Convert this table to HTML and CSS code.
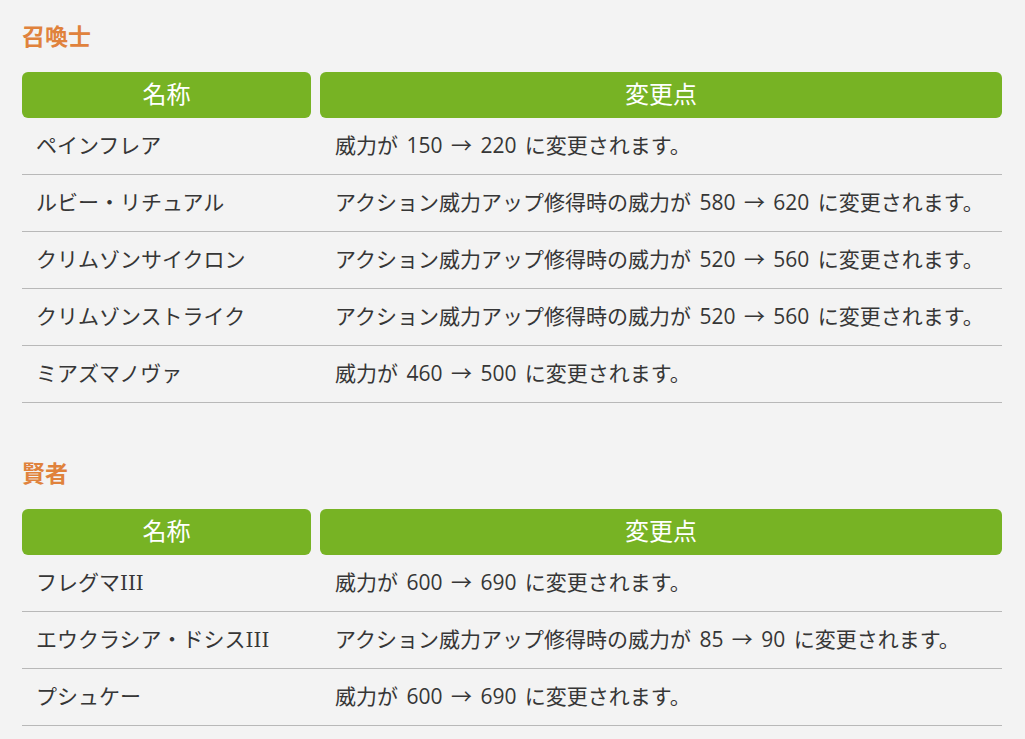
FILE: index.html
```html
<!DOCTYPE html>
<html lang="ja">
<head>
<meta charset="utf-8">
<link rel="stylesheet" href="styles.css">
</head>
<body>
<div class="page">
  <section class="job">
    <h2 class="job-title">召喚士</h2>
    <div class="table">
      <div class="head">
        <div class="hcell">名称</div>
        <div class="hcell">変更点</div>
      </div>
      <div class="row"><div class="cell">ペインフレア</div><div class="cell">威力が 150 → 220 に変更されます。</div></div>
      <div class="row"><div class="cell">ルビー・リチュアル</div><div class="cell">アクション威力アップ修得時の威力が 580 → 620 に変更されます。</div></div>
      <div class="row"><div class="cell">クリムゾンサイクロン</div><div class="cell">アクション威力アップ修得時の威力が 520 → 560 に変更されます。</div></div>
      <div class="row"><div class="cell">クリムゾンストライク</div><div class="cell">アクション威力アップ修得時の威力が 520 → 560 に変更されます。</div></div>
      <div class="row"><div class="cell">ミアズマノヴァ</div><div class="cell">威力が 460 → 500 に変更されます。</div></div>
    </div>
  </section>
  <section class="job">
    <h2 class="job-title">賢者</h2>
    <div class="table">
      <div class="head">
        <div class="hcell">名称</div>
        <div class="hcell">変更点</div>
      </div>
      <div class="row"><div class="cell">フレグマ<span class="roman">III</span></div><div class="cell">威力が 600 → 690 に変更されます。</div></div>
      <div class="row"><div class="cell">エウクラシア・ドシス<span class="roman">III</span></div><div class="cell">アクション威力アップ修得時の威力が 85 → 90 に変更されます。</div></div>
      <div class="row"><div class="cell">プシュケー</div><div class="cell">威力が 600 → 690 に変更されます。</div></div>
    </div>
  </section>
</div>
</body>
</html>
```
FILE: styles.css
```css
html, body {
  margin: 0;
  padding: 0;
  background: #f3f3f3;
}
body {
  font-family: "Open Sans", "Noto Sans CJK JP", sans-serif;
  color: #363636;
}
.page {
  width: 980px;
  margin-left: 22px;
  padding-top: 21px;
}
.job + .job {
  margin-top: 55px;
}
.job-title {
  margin: 0 0 21px 0;
  font-size: 23px;
  line-height: 30px;
  font-weight: bold;
  color: #e0823c;
}
.head,
.row {
  display: grid;
  grid-template-columns: 289px 1fr;
  column-gap: 9px;
}
.hcell {
  background: #77b324;
  color: #ffffff;
  border-radius: 6px;
  height: 46px;
  box-sizing: border-box;
  padding-bottom: 6px;
  display: flex;
  align-items: center;
  justify-content: center;
  font-size: 24px;
}
.row {
  border-bottom: 1px solid #b8b8b8;
  height: 56px;
  box-sizing: content-box;
  align-items: center;
}
.cell {
  font-size: 21px;
  padding-left: 14px;
  padding-bottom: 5px;
  white-space: nowrap;
  word-spacing: 3px;
}
.cell + .cell {
  padding-left: 15px;
}
.roman {
  font-family: "DejaVu Serif", serif;
  font-size: 20px;
}
```
